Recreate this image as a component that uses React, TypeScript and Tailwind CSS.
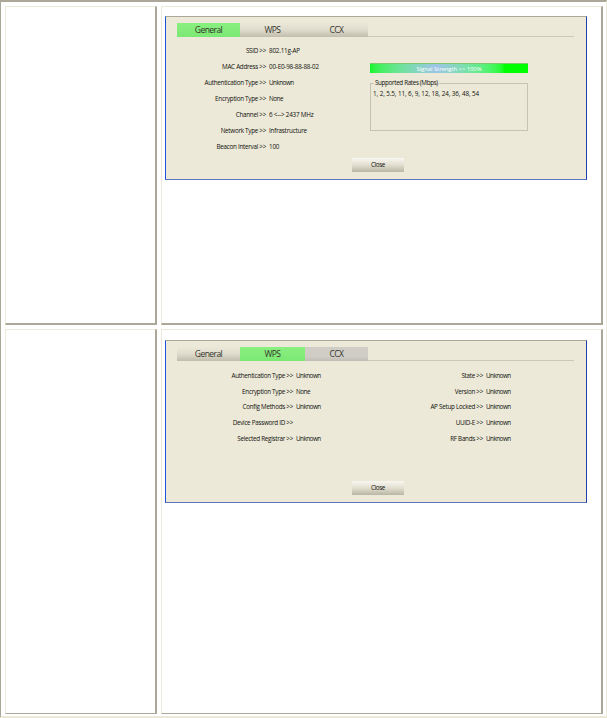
import clsx from "clsx";

type Row = { label: string; value: string };

const generalRows: Row[] = [
  { label: "SSID", value: "802.11g-AP" },
  { label: "MAC Address", value: "00-E0-98-88-88-02" },
  { label: "Authentication Type", value: "Unknown" },
  { label: "Encryption Type", value: "None" },
  { label: "Channel", value: "6 <--> 2437 MHz" },
  { label: "Network Type", value: "Infrastructure" },
  { label: "Beacon Interval", value: "100" },
];

const wpsLeft: Row[] = [
  { label: "Authentication Type", value: "Unknown" },
  { label: "Encryption Type", value: "None" },
  { label: "Config Methods", value: "Unknown" },
  { label: "Device Password ID", value: "" },
  { label: "Selected Registrar", value: "Unknown" },
];

const wpsRight: Row[] = [
  { label: "State", value: "Unknown" },
  { label: "Version", value: "Unknown" },
  { label: "AP Setup Locked", value: "Unknown" },
  { label: "UUID-E", value: "Unknown" },
  { label: "RF Bands", value: "Unknown" },
];

const cell = "border-t border-l border-t-[#ece9d8] border-l-[#ece9d8] border-r-2 border-r-[#aca899] border-b-[#aca899]";

function Tabs({ active }: { active: string }) {
  return (
    <div className="ml-[11px] mr-[12px] flex h-[14px] items-stretch">
      {["General", "WPS", "CCX"].map((t, i) => (
        <div
          key={t}
          className={clsx(
            "flex items-center justify-center text-[8.5px] leading-none tracking-[-0.55px] text-[#34342c]",
            i === 0 ? "w-[63px]" : i === 1 ? "w-[65px]" : "w-[63px]",
            t === active
              ? "bg-linear-to-b from-[#8af080] to-[#7ce874]"
              : t === "CCX" && active === "WPS"
                ? "bg-linear-to-b from-[#cfcdc5] from-70% to-[#bebcb2]"
                : "bg-linear-to-b from-[#ebe8d9] via-[#dfdccd] to-[#c0bdad]"
          )}
        >
          {t}
        </div>
      ))}
      <div className="flex-1 border-b border-[#cbc8b8]" />
    </div>
  );
}

function Rows({ rows, labelWidth, rowHeight }: { rows: Row[]; labelWidth: string; rowHeight: string }) {
  return (
    <div className="text-[6.3px] [font-variant-ligatures:none]">
      {rows.map((r) => (
        <div key={r.label} className={clsx("flex items-center whitespace-pre leading-none", rowHeight)}>
          <span className={clsx("mr-[3px] text-right tracking-[-0.28px]", labelWidth)}>{r.label} &gt;&gt;</span>
          <span className={r.value === "Unknown" || r.value === "None" ? "tracking-[-0.5px]" : "tracking-[-0.2px]"}>
            {r.value}
          </span>
        </div>
      ))}
    </div>
  );
}

function CloseButton() {
  return (
    <button className="flex h-[14px] w-[52px] items-center justify-center bg-linear-to-b from-[#f8f7f1] via-[#e2dfd0] to-[#b9b6a4] text-[6.3px] leading-none tracking-[-0.4px]">
      Close
    </button>
  );
}

function Panel({ active, className, children }: { active: string; className: string; children: React.ReactNode }) {
  return (
    <div
      className={clsx(
        "ml-[3px] flex w-[422px] flex-col border border-t-[#aca899] border-r-[#2440ac] border-b-[#5b74c0] border-l-[#1c55d8] bg-[#ece9d8] pt-[6px] text-[#11110d]",
        className
      )}
    >
      <Tabs active={active} />
      {children}
    </div>
  );
}

export default function App() {
  return (
    <div className="h-[718px] w-[607px] border-t-2 border-r border-b-2 border-l border-t-[#aca899] border-r-[#ece9d8] border-b-[#ece9d8] border-l-[#aca899] bg-white pt-1 pl-1 font-['Open_Sans',sans-serif]">
      <div className="grid grid-cols-[152px_442px] grid-rows-[319px_385px] gap-1">
        <div className={clsx(cell, "border-b-2")} />
        <div className={clsx(cell, "border-b-2 pt-[9px]")}>
          <Panel active="General" className="h-[164px]">
            <div className="flex h-[121px]">
              <div className="w-[204px] pt-[6.5px]">
                <Rows rows={generalRows} labelWidth="w-[100px]" rowHeight="h-[16px]" />
              </div>
              <div className="w-[158px] pt-[26px]">
                <div className="flex h-[10px] items-center justify-center border-t border-[#83c46e] bg-linear-to-r from-[#10f628] via-[#9dc4e6] via-42% to-[#00ff00] to-85% text-[6px] leading-none tracking-[-0.1px] text-white">
                  Signal Strength &gt;&gt; 100%
                </div>
                <fieldset className="mt-[6px] h-[52px] border border-[#c5c3b6] pl-[2px] text-[6.3px] leading-none">
                  <legend className="ml-px h-[8px] px-px leading-[8px] tracking-[-0.35px]">Supported Rates (Mbps)</legend>
                  <div className="pt-[4px] tracking-[-0.08px] whitespace-nowrap">
                    1, 2, 5.5, 11, 6, 9, 12, 18, 24, 36, 48, 54
                  </div>
                </fieldset>
              </div>
            </div>
            <div className="ml-[186px]">
              <CloseButton />
            </div>
          </Panel>
        </div>

        <div className={clsx(cell, "border-b")} />
        <div className={clsx(cell, "border-b pt-[10px]")}>
          <Panel active="WPS" className="h-[163px]">
            <div className="flex h-[120px] pt-[7px]">
              <div className="w-[190px]">
                <Rows rows={wpsLeft} labelWidth="w-[127px]" rowHeight="h-[15.8px]" />
              </div>
              <Rows rows={wpsRight} labelWidth="w-[127px]" rowHeight="h-[15.8px]" />
            </div>
            <div className="ml-[186px]">
              <CloseButton />
            </div>
          </Panel>
        </div>
      </div>
    </div>
  );
}
